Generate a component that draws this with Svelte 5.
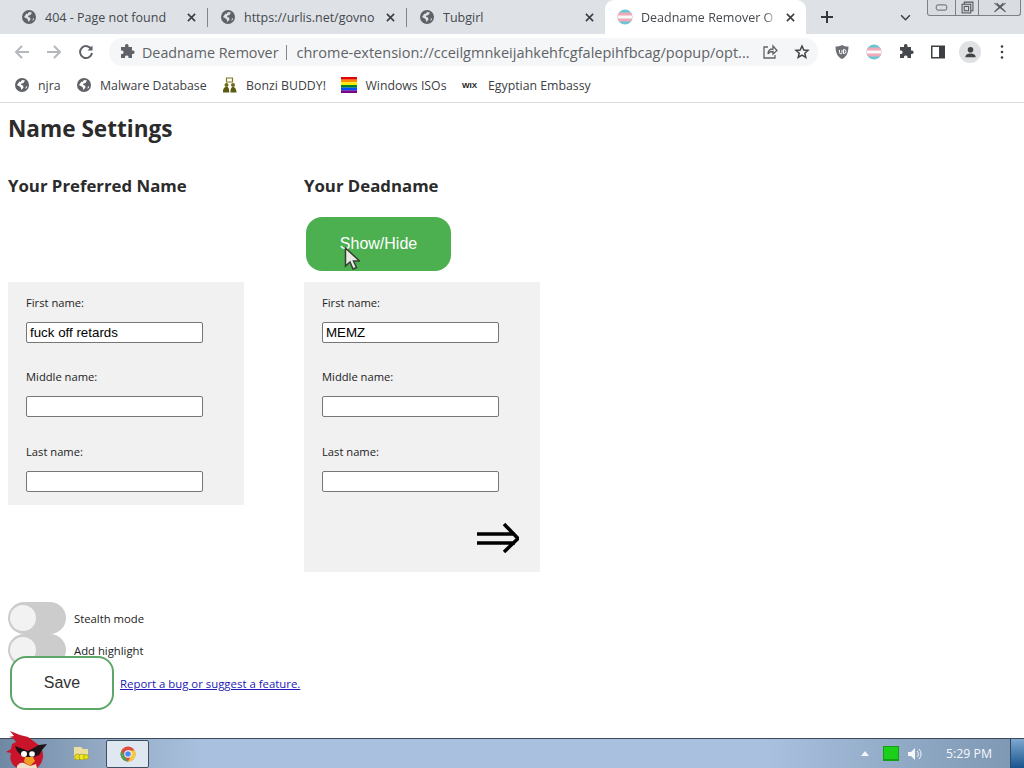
<script>
  const tabs = [
    { title: '404 - Page not found' },
    { title: 'https://urlis.net/govno' },
    { title: 'Tubgirl' }
  ];

  const sides = [
    { id: 'preferred', heading: 'Your Preferred Name', first: 'fuck off retards' },
    { id: 'dead', heading: 'Your Deadname', first: 'MEMZ' }
  ];

  const globe = 'M8 1a7 7 0 1 0 0 14A7 7 0 0 0 8 1zM3 8l2.500-3.500 1 .5 1.500-2 3 .5-1.500 2.500-2 .5L7 8l2 .5.500 2-2 2.500-1-3L3 8zm9 1 1.200 1-1.700 2.200L12 9z';
</script>

{#snippet globeIcon()}
  <svg class="fav" viewBox="0 0 16 16"><path fill="#5f6368" fill-rule="evenodd" d={globe} /></svg>
{/snippet}

{#snippet transIcon()}
  <svg class="fav" viewBox="0 0 16 16">
    <clipPath id="round"><circle cx="8" cy="8" r="7.500" /></clipPath>
    <g clip-path="url(#round)">
      <rect width="16" height="16" fill="#6ac6d6" />
      <rect y="3.500" width="16" height="9" fill="#efa9b8" />
      <rect y="6.500" width="16" height="3" fill="#fafafa" />
    </g>
  </svg>
{/snippet}

{#snippet puzzle(color)}
  <svg class="fav" viewBox="0 0 16 16"><path fill={color} d="M6 1.500a1.800 1.800 0 0 1 3.500 0V3h3.500v3.500h1.200a1.800 1.800 0 0 1 0 3.500H13v4H9.500v-1.200a1.800 1.800 0 0 0-3.500 0V14H2v-4h1.200a1.800 1.800 0 0 0 0-3.500H2V3h4V1.500z" /></svg>
{/snippet}

<div class="screen">
  <header class="chrome">
    <div class="tabstrip">
      {#each tabs as tab}
        <div class="tab">
          {@render globeIcon()}
          <span class="tab-title">{tab.title}</span>
          <svg class="close" viewBox="0 0 10 10"><path d="M1 1l8 8M9 1l-8 8" /></svg>
        </div>
      {/each}
      <div class="tab active">
        {@render transIcon()}
        <span class="tab-title">Deadname Remover O</span>
        <svg class="close" viewBox="0 0 10 10"><path d="M1 1l8 8M9 1l-8 8" /></svg>
      </div>
      <svg class="newtab" viewBox="0 0 12 12"><path d="M6 0v12M0 6h12" /></svg>
      <svg class="chevron" viewBox="0 0 12 8"><path d="M1 1.500l5 5 5-5" /></svg>
      <div class="winctl">
        <span class="wc min"><svg viewBox="0 0 14 8"><rect x="1" y="1" width="12" height="6" rx="2" /></svg></span>
        <span class="wc max"><svg viewBox="0 0 12 12"><rect x="1" y="3" width="8" height="8" /><rect x="3" y="5" width="4" height="4" /><path d="M3 3V1h8v8H9" /></svg></span>
        <span class="wc cross"><svg viewBox="0 0 12 10"><path d="M1 1l10 8M11 1L1 9M3 1l8 8M9 1L1 9" /></svg></span>
      </div>
    </div>

    <div class="toolbar">
      <svg class="nav" viewBox="0 0 16 16"><path stroke="#b4b8bd" d="M15 8H2M8 2L2 8l6 6" /></svg>
      <svg class="nav" viewBox="0 0 16 16"><path stroke="#b4b8bd" d="M1 8h13M8 2l6 6-6 6" /></svg>
      <svg class="nav" viewBox="0 0 16 16"><path stroke="#5f6368" d="M13.500 5.500A6 6 0 1 0 14 9" /><path fill="#5f6368" d="M14.500 1.500v5h-5z" /></svg>
      <div class="omnibox">
        {@render puzzle('#5f6368')}
        <span class="ext-name">Deadname Remover</span>
        <span class="omni-sep"></span>
        <span class="url">chrome-extension://cceilgmnkeijahkehfcgfalepihfbcag/popup/opt...</span>
        <svg class="omni-icon" viewBox="0 0 16 16"><path fill="none" stroke="#5f6368" stroke-width="1.300" d="M6 3H2v11h11v-3M6 10c0-4 3-5 5-5V2l4 4.500L11 10V7.500c-2 0-4 .5-5 2.500z" /></svg>
        <svg class="omni-icon star" viewBox="0 0 16 16"><path fill="none" stroke="#444" stroke-width="1.500" d="M8 2l1.800 4 4.200.4-3.200 2.800 1 4.300L8 11.200l-3.800 2.300 1-4.300L2 6.400 6.200 6z" /></svg>
      </div>
      <div class="ext-icons">
        <svg class="fav" viewBox="0 0 16 16"><path fill="#6d7074" d="M8 1c2 1 4 1.500 6.500 1.500C14.500 9 12 13.500 8 15 4 13.500 1.500 9 1.500 2.500 4 2.500 6 2 8 1z" /><path fill="none" stroke="#fff" d="M5.500 6v2.500a1.200 1.200 0 0 0 2.500 0V6M9.500 5.500v4H10a2 2 0 0 0 0-4z" /></svg>
        {@render transIcon()}
        {@render puzzle('#45484c')}
        <svg class="fav" viewBox="0 0 16 16"><path fill="#3c4043" fill-rule="evenodd" d="M1 1.500h14v13H1zM2.500 3v10H9V3z" /></svg>
        <span class="avatar"><svg viewBox="0 0 16 16"><circle cx="8" cy="5" r="3" fill="#444" /><path fill="#444" d="M2.500 13c0-3 3-4 5.500-4s5.500 1 5.500 4z" /></svg></span>
        <svg class="dots" viewBox="0 0 4 16"><circle cx="2" cy="2.500" r="1.300" /><circle cx="2" cy="8" r="1.300" /><circle cx="2" cy="13.500" r="1.300" /></svg>
      </div>
    </div>

    <div class="bookmarks">
      <span class="bm">{@render globeIcon()}njra</span>
      <span class="bm">{@render globeIcon()}Malware Database</span>
      <span class="bm">
        <svg class="fav" viewBox="0 0 16 16">
          <path fill="none" stroke="#7d7a22" stroke-width="1.200" d="M4.500 1h6v4h-6z" />
          <circle cx="4.500" cy="8" r="2" fill="#6e6c18" /><circle cx="11" cy="8" r="2" fill="#6e6c18" />
          <path fill="#5c5a12" d="M1 15.500c0-4 1-5.500 3.500-5.500S7 11.500 7.300 15.500zM8.500 15.500c0-4 1-5.500 2.500-5.500s3.500 1.500 3.500 5.500z" />
        </svg>
        Bonzi BUDDY!
      </span>
      <span class="bm">
        <svg class="fav" viewBox="0 0 16 16">
          {#each ['#e40303', '#ff8c00', '#ffed00', '#008026', '#004dff', '#750787'] as c, i}
            <rect y={i * 2.670} width="16" height="2.700" fill={c} />
          {/each}
        </svg>
        Windows ISOs
      </span>
      <span class="bm"><span class="wix">WIX</span>Egyptian Embassy</span>
    </div>
  </header>

  <main class="page">
    <h1>Name Settings</h1>
    <div class="columns">
      {#each sides as side}
        <section class="col">
          <h2>{side.heading}</h2>
          <div class="btn-slot">
            {#if side.id === 'dead'}
              <button class="showhide">Show/Hide</button>
              <svg class="cursor" viewBox="0 0 16 24"><path fill="#e8ebe6" stroke="#33402f" stroke-width="1.500" d="M1.500 1v18l4.500-4 3 7 3.500-1.500-3-6.500h6z" /></svg>
            {/if}
          </div>
          <div class="panel" class:tall={side.id === 'dead'}>
            <label for="{side.id}-first">First name:</label>
            <input id="{side.id}-first" value={side.first} />
            <label for="{side.id}-middle">Middle name:</label>
            <input id="{side.id}-middle" class="middle" />
            <label for="{side.id}-last">Last name:</label>
            <input id="{side.id}-last" class="last" />
            {#if side.id === 'dead'}
              <svg class="arrow" viewBox="0 0 42 30"><path d="M0 11h38M0 20h38M27 1l14 14.500L27 29" /></svg>
            {/if}
          </div>
        </section>
      {/each}
    </div>

    <div class="toggles">
      <div class="toggle-row"><span class="toggle"><span class="knob"></span></span><span>Stealth mode</span></div>
      <div class="toggle-row"><span class="toggle"><span class="knob"></span></span><span>Add highlight</span></div>
    </div>
    <div class="save-row">
      <button class="save">Save</button>
      <a href="#report">Report a bug or suggest a feature.</a>
    </div>
  </main>

  <footer class="taskbar">
    <svg class="bird" viewBox="0 0 44 38">
      <path fill="#c9142a" d="M6 1l10 4 8 2 8 6 4 3c3 5 4 10 2 15-1 3-3 5-5 7H14C8 36 5 30 7 23l-5-1 5-3 1-5 4-2-3-4-4-1 5-1z" />
      <path fill="#1c1416" d="M11 16l13 5 11-6 8-1-5 6-3 5-8 3-9-2-5-5z" />
      <circle cx="20" cy="24" r="3" fill="#fff" /><circle cx="28" cy="24" r="2.800" fill="#fff" />
      <path fill="#f0a020" d="M21 27h8l2 4-5 5-6-4z" />
      <path fill="#f0e0c8" d="M13 36c2-3 4-4 7-3l6 3 6-2 1 4H13z" />
    </svg>
    <svg class="folder" viewBox="0 0 18 18">
      <path fill="#eadf9e" d="M2 2h7l2 2h5v10H2z" />
      <circle cx="5.500" cy="12" r="3" fill="#e8e010" stroke="#8d8a30" stroke-width=".6" />
      <circle cx="10" cy="12" r="3" fill="#f2ea20" stroke="#8d8a30" stroke-width=".6" />
      <circle cx="14" cy="12" r="2.500" fill="#e8e010" stroke="#8d8a30" stroke-width=".6" />
    </svg>
    <div class="task-btn">
      <svg viewBox="0 0 16 16">
        <circle cx="8" cy="8" r="7.500" fill="#dd4b3e" />
        <path fill="#4aa657" d="M1.500 4.500 5 11l3 4.500A7.500 7.500 0 0 1 1.500 4.500z" />
        <path fill="#f7c93e" d="M8 4.500h6.800A7.500 7.500 0 0 1 8 15.500L11 10z" />
        <circle cx="8" cy="8" r="3.700" fill="#fff" /><circle cx="8" cy="8" r="2.800" fill="#4a8af4" />
      </svg>
    </div>
    <div class="tray">
      <span class="tray-up"></span>
      <span class="tray-net"></span>
      <svg class="tray-vol" viewBox="0 0 16 14"><path fill="#f4f6f8" d="M1 5h3l4-4v12L4 9H1z" /><path fill="none" stroke="#f4f6f8" d="M10 4a4 4 0 0 1 0 6M12 2a7 7 0 0 1 0 10" /></svg>
      <span class="clock">5:29 PM</span>
      <span class="show-desktop"></span>
    </div>
  </footer>
</div>

<style>
  :global(body) {
    margin: 0;
    background: #fff;
  }

  .screen {
    width: 1024px;
    height: 768px;
    display: flex;
    flex-direction: column;
    overflow: hidden;
    font-family: "Open Sans", "Noto Sans", sans-serif;
  }

  svg {
    display: block;
    flex: none;
  }

  .fav {
    width: 16px;
    height: 16px;
  }

  /* browser frame */
  .chrome {
    flex: none;
    height: 103px;
    border-bottom: 1px solid #dadce0;
    box-sizing: border-box;
    display: flex;
    flex-direction: column;
  }

  .tabstrip {
    height: 34px;
    background: #dee1e6;
    display: flex;
    align-items: center;
    padding-left: 8px;
    flex: none;
  }

  .tab {
    width: 199px;
    height: 34px;
    box-sizing: border-box;
    padding: 0 11px 0 13px;
    display: flex;
    align-items: center;
    gap: 8px;
    position: relative;
    flex: none;
  }

  .tab + .tab::before {
    content: "";
    position: absolute;
    left: 0;
    top: 8px;
    height: 19px;
    width: 1px;
    background: #80868b;
  }

  .tab:nth-child(4)::before {
    content: none;
  }

  .tab.active {
    width: 201px;
    padding-left: 12px;
    background: #fff;
    border-radius: 9px 9px 0 0;
  }

  .tab-title {
    flex: 1;
    min-width: 0;
    white-space: nowrap;
    overflow: hidden;
    font-size: 12.500px;
    color: #45484d;
  }

  .active .tab-title {
    -webkit-mask-image: linear-gradient(90deg, #000 90%, transparent);
    mask-image: linear-gradient(90deg, #000 90%, transparent);
  }

  .close {
    width: 9px;
    height: 9px;
    fill: none;
    stroke: #3c4043;
    stroke-width: 1.800;
  }

  .newtab {
    width: 12px;
    height: 12px;
    margin-left: 15px;
    fill: none;
    stroke: #35383c;
    stroke-width: 2;
  }

  .chevron {
    width: 11px;
    height: 7px;
    margin-left: 67px;
    fill: none;
    stroke: #3c4043;
    stroke-width: 1.800;
  }

  .winctl {
    display: flex;
    height: 16px;
    margin-left: 16px;
    align-self: flex-start;
    border: 1px solid #7d8186;
    border-top: 0;
    border-radius: 0 0 3px 3px;
    box-sizing: border-box;
    background: #d9dce1;
  }

  .wc {
    display: flex;
    align-items: center;
    justify-content: center;
    border-left: 1px solid #7d8186;
    fill: none;
    stroke: #55585c;
    stroke-width: 1;
  }

  .min {
    width: 27px;
    border-left: 0;
  }

  .max {
    width: 22px;
  }

  .cross {
    width: 41px;
  }

  .min svg {
    width: 13px;
    height: 7px;
  }

  .max svg {
    width: 13px;
    height: 13px;
  }

  .cross svg {
    width: 14px;
    height: 11px;
  }

  .toolbar {
    height: 36px;
    flex: none;
    background: #fff;
    display: flex;
    align-items: center;
    padding-left: 14px;
  }

  .nav {
    width: 16px;
    height: 16px;
    margin-right: 16px;
    fill: none;
    stroke-width: 2;
  }

  .omnibox {
    width: 709px;
    height: 28px;
    margin-left: -1px;
    border-radius: 14px;
    background: #f5f6f7;
    display: flex;
    align-items: center;
    padding-left: 10px;
    box-sizing: border-box;
    flex: none;
    font-size: 14.500px;
    color: #5f6368;
    white-space: nowrap;
  }

  .ext-name {
    margin-left: 7px;
    font-size: 14.300px;
  }

  .omni-sep {
    width: 1px;
    height: 15px;
    background: #80868b;
    margin: 0 9px 0 8px;
  }

  .url {
    width: 455px;
    overflow: hidden;
  }

  .omni-icon {
    width: 16px;
    height: 16px;
    margin-left: 11px;
  }

  .star {
    margin-left: 16px;
  }

  .ext-icons {
    display: flex;
    align-items: center;
    gap: 16px;
    margin-left: 16px;
  }

  .avatar {
    width: 22px;
    height: 22px;
    margin: 0 -3px;
    border-radius: 50%;
    background: #dfe1e5;
    display: flex;
    align-items: center;
    justify-content: center;
  }

  .avatar svg {
    width: 15px;
    height: 15px;
  }

  .dots {
    width: 4px;
    height: 16px;
    fill: #3c4043;
    margin-left: 6px;
  }

  .bookmarks {
    flex: 1;
    background: #fff;
    display: flex;
    align-items: center;
    gap: 15.500px;
    padding: 0 0 2px 14px;
    font-size: 12.300px;
    color: #3c4043;
  }

  .bm {
    display: flex;
    align-items: center;
    gap: 8px;
    white-space: nowrap;
  }

  .wix {
    width: 18px;
    font: bold 8px "Liberation Sans", sans-serif;
    color: #222;
  }

  /* options page */
  .page {
    flex: 1;
    min-height: 0;
    padding: 0 8px;
    color: #202124;
  }

  h1 {
    font-size: 22.600px;
    font-weight: 700;
    line-height: 33px;
    margin: 9px 0 0;
    color: #2b2b2b;
  }

  h2 {
    font-size: 16.800px;
    font-weight: 700;
    line-height: 24px;
    margin: 29px 0 0;
    color: #2b2b2b;
  }

  .columns {
    display: flex;
    gap: 60px;
    align-items: flex-start;
  }

  .col {
    width: 236px;
  }

  .btn-slot {
    height: 54px;
    margin-top: 19px;
    margin-bottom: 11px;
    position: relative;
  }

  .showhide {
    width: 145px;
    height: 54px;
    margin-left: 2px;
    border: 0;
    border-radius: 16px;
    background: #4caf50;
    color: #fff;
    font: 16px "Liberation Sans", sans-serif;
    padding: 0;
  }

  .cursor {
    position: absolute;
    left: 40px;
    top: 30px;
    width: 16px;
    height: 24px;
  }

  .panel {
    background: #f1f1f1;
    padding: 13px 18px;
    height: 223px;
    box-sizing: border-box;
    display: flex;
    flex-direction: column;
    align-items: flex-start;
  }

  .panel.tall {
    height: 290px;
  }

  label {
    font-size: 11.200px;
    line-height: 16px;
    color: #222;
    margin-bottom: 11px;
    flex: none;
  }

  input {
    width: 177px;
    height: 21px;
    flex: none;
    box-sizing: border-box;
    padding: 1px 3px;
    border: 1px solid #767676;
    border-radius: 2px;
    background: #fff;
    font: 13.333px "Liberation Sans", sans-serif;
    color: #000;
    margin-bottom: 26px;
    outline: none;
  }

  input.middle {
    margin-bottom: 27px;
  }

  input.last {
    margin-bottom: 0;
  }

  .arrow {
    align-self: flex-end;
    margin: 31px 3px 0 0;
    width: 42px;
    height: 30px;
    fill: none;
    stroke: #000;
    stroke-width: 3.500;
  }

  .toggles {
    margin-top: 30px;
  }

  .toggle-row {
    display: flex;
    align-items: center;
    gap: 8px;
    height: 32px;
    font-size: 11.300px;
    color: #222;
  }

  .toggle {
    width: 58px;
    height: 32px;
    border-radius: 16px;
    background: #ccc;
    display: flex;
    align-items: center;
    padding-left: 2px;
    box-sizing: border-box;
  }

  .knob {
    width: 26px;
    height: 26px;
    border-radius: 50%;
    background: #f2f2f2;
  }

  .save-row {
    display: flex;
    align-items: center;
    gap: 6px;
    margin: -10px 0 0 2px;
    position: relative;
  }

  .save {
    width: 104px;
    height: 54px;
    border: 2px solid #5ca768;
    border-radius: 16px;
    background: #fff;
    color: #333;
    font: 16px "Liberation Sans", sans-serif;
    padding: 0;
  }

  a {
    font-size: 11.400px;
    color: #2218b8;
    text-decoration: underline;
  }

  /* windows taskbar */
  .taskbar {
    flex: none;
    height: 30px;
    box-sizing: border-box;
    border-top: 1px solid #3c4a5c;
    background: linear-gradient(90deg, #6f89a5 0, #94aac4 10%, #a9c1de 20%, #a9c1de 75%, #8da6c2 90%, #7d96b2 100%);
    display: flex;
    align-items: center;
    position: relative;
  }

  .bird {
    position: absolute;
    left: 4px;
    bottom: 0;
    width: 44px;
    height: 38px;
  }

  .folder {
    width: 18px;
    height: 18px;
    margin-left: 72px;
  }

  .task-btn {
    width: 43px;
    height: 28px;
    margin-left: 16px;
    box-sizing: border-box;
    border: 1px solid #3f4f63;
    border-radius: 2px;
    background: #dfe8f1;
    display: flex;
    align-items: center;
    justify-content: center;
  }

  .task-btn svg {
    width: 16px;
    height: 16px;
  }

  .tray {
    margin-left: auto;
    display: flex;
    align-items: center;
    height: 100%;
  }

  .tray-up {
    width: 0;
    height: 0;
    border: 4px solid transparent;
    border-top: 0;
    border-bottom: 5px solid #f4f6f8;
  }

  .tray-net {
    width: 14px;
    height: 12px;
    margin-left: 14px;
    background: #1bcf1b;
    border: 1px solid #14a014;
    border-bottom-width: 2px;
  }

  .tray-vol {
    width: 16px;
    height: 14px;
    margin-left: 8px;
  }

  .clock {
    margin-left: 23px;
    width: 64px;
    font-size: 12.300px;
    color: #f6f8fb;
    white-space: nowrap;
  }

  .show-desktop {
    width: 14px;
    height: 100%;
    background: linear-gradient(180deg, #7fa8cf, #17548f);
    border-left: 1px solid #2c4966;
    box-sizing: border-box;
  }
</style>
